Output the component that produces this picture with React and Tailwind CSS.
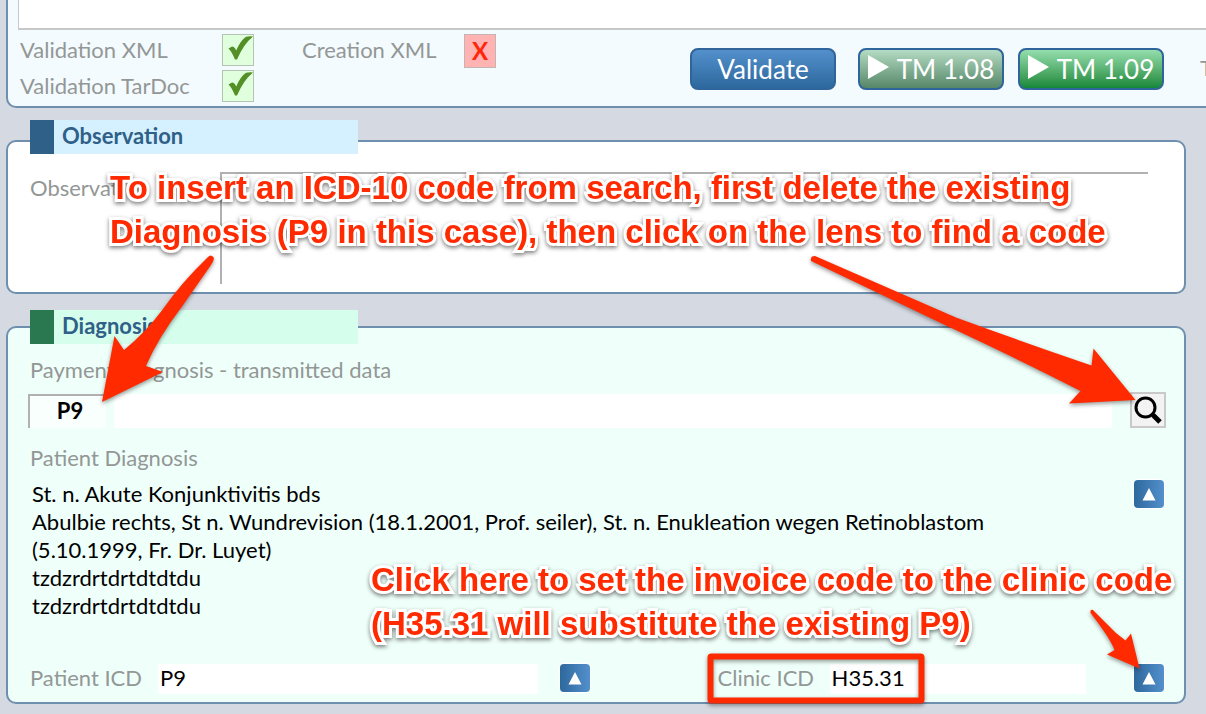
import { useId } from "react";

const label = "text-[22px] leading-7 text-[#939796] whitespace-nowrap";
const field = "bg-white text-[22px] text-black outline-none min-w-0";

function Tick() {
  return (
    <span className="flex h-8 w-8 items-center justify-center border border-[#b4c4b4] bg-[#dfffdd]" role="img" aria-label="Valid">
      <svg width="30" height="30" viewBox="0 0 30 30" fill="#538f26" aria-hidden="true">
        <path d="M5.500 13.500 L9 11.500 Q11.500 11.500 13.200 15.500 Q17.500 5.500 23 1.800 Q26.500 0.800 30 1.400 Q20.500 9 14 24.500 L12 24.500 Q9 17 5.500 13.500 Z" />
      </svg>
    </span>
  );
}

function SectionTitle({ children, bar, back, lift }) {
  return (
    <h2 className={`flex h-[34px] w-[328px] items-center ${lift} ${back}`}>
      <span className={`h-full w-6 ${bar}`} />
      <span className="pb-[2px] pl-2 text-[22px] font-bold leading-7 text-[#2f6088]">{children}</span>
    </h2>
  );
}

function UpButton({ name }) {
  return (
    <button type="button" aria-label={name} className="flex h-7 w-[30px] shrink-0 items-center justify-center rounded bg-linear-to-r from-[#2d689d] to-[#5390cc] ring-1 ring-white">
      <svg width="14" height="14" viewBox="0 0 14 14" fill="#fff" aria-hidden="true">
        <path d="M7 1 L13.500 13.500 H0.500 Z" />
      </svg>
    </button>
  );
}

function RunButton({ children, tone }) {
  return (
    <button type="button" className={`flex h-[42px] w-[146px] items-center justify-center gap-2 rounded-lg border-2 border-[#30659c] text-[26px] text-white ${tone}`}>
      {children}
    </button>
  );
}

function Play() {
  return (
    <svg width="21" height="24" viewBox="0 0 21 24" fill="#fff" className="mb-1" aria-hidden="true">
      <path d="M0 0 L21 12 L0 24 Z" />
    </svg>
  );
}

function Note({ place, children }) {
  return (
    <p className={`absolute whitespace-pre font-['Liberation_Sans',Arial,sans-serif] text-[33px] font-bold leading-[44px] text-[#ff2a00] [paint-order:stroke_fill] [-webkit-text-stroke:6px_#fff] drop-shadow-[0_2px_2px_rgba(0,0,0,0.5)] ${place}`}>
      {children}
    </p>
  );
}

const diagnosis = `St. n. Akute Konjunktivitis bds
Abulbie rechts, St n. Wundrevision (18.1.2001, Prof. seiler), St. n. Enukleation wegen Retinoblastom
(5.10.1999, Fr. Dr. Luyet)
tzdzrdrtdrtdtdtdu
tzdzrdrtdrtdtdtdu`;

export default function App() {
  const id = useId();
  return (
    <main className="relative min-h-screen overflow-hidden bg-[#d5d9e1] pb-[10px] pl-[6px] pr-5 font-[Lato,Carlito,sans-serif]">
      <section className="-mr-16 rounded-bl-[10px] border-b-2 border-l-2 border-[#6f8fae] bg-[#f3fbff] pb-1 pl-[10px]">
        <textarea aria-label="Messages" readOnly className="block h-[30px] w-full resize-none border-b-2 border-l border-[#c8c8c8] bg-white outline-none" />
        <div className="flex pt-1">
          <div className="grid w-[204px] shrink-0 grid-cols-1 gap-1 pl-[2px]">
            <span className={`${label} flex h-8 items-center`}>Validation XML</span>
            <span className={`${label} flex h-8 items-center`}>Validation TarDoc</span>
          </div>
          <div className="grid content-start gap-1">
            <Tick />
            <Tick />
          </div>
          <span className={`${label} flex h-8 w-[162px] items-center pl-12`}>Creation XML</span>
          <span className="ml-12 flex h-[34px] w-8 items-center justify-center border border-[#c4b4b4] bg-[#ffb3b3] text-[24px] font-bold text-[#ff260a]">X</span>
          <div className="ml-auto mr-[86px] flex pt-[14px]">
            <RunButton tone="bg-linear-to-b from-[#5390cc] to-[#2d689d]">Validate</RunButton>
            <div className="ml-[22px] flex gap-[14px]">
              <RunButton tone="bg-linear-to-b from-[#b4dcc4] to-[#568768]"><Play />TM 1.08</RunButton>
              <RunButton tone="bg-linear-to-b from-[#94deae] to-[#128838]"><Play />TM 1.09</RunButton>
            </div>
            <span className={`${label} -mr-9 ml-9 w-0 pt-[6px]`}>T</span>
          </div>
        </div>
      </section>

      <section className="mt-8 rounded-[10px] border-2 border-[#6f8fae] bg-white pb-2 pl-[22px] pr-9">
        <SectionTitle lift="-mt-[22px]" bar="bg-[#2f6088]" back="bg-[#d5f1ff]">Observation</SectionTitle>
        <div className="flex pt-[18px]">
          <label htmlFor={`${id}o`} className={`${label} flex w-[190px] shrink-0 gap-2 pt-[2px]`}>
            <span>Observation</span>
            <span>:</span>
          </label>
          <textarea id={`${id}o`} className={`${field} block h-28 flex-1 resize-none border-l-2 border-t-2 border-[#b1b1b1]`} />
        </div>
      </section>

      <section className="mt-8 rounded-[10px] border-2 border-[#6f8fae] bg-[#effffa] pb-2 pl-[22px] pr-5">
        <SectionTitle lift="-mt-[18px]" bar="bg-[#29784f]" back="bg-[#d5ffec]">Diagnosis</SectionTitle>
        <label htmlFor={`${id}p`} className={`${label} mt-3 block`}>Payment Diagnosis - transmitted data</label>
        <div className="-ml-[2px] mt-2 flex items-end">
          <input id={`${id}p`} defaultValue="P9" className="h-[34px] w-[78px] border-l-2 border-t-2 border-[#b1b1b1] bg-[#f8fffd] pb-1 pl-1 text-center text-[22px] font-bold outline-none" />
          <input aria-label="Diagnosis description" className={`${field} ml-2 h-[34px] flex-1`} />
          <button type="button" aria-label="Search code" className="-mr-[2px] ml-[18px] flex h-9 w-9 items-center justify-center border-2 border-[#c9c9c9] bg-[#f3f3f3]">
            <svg width="30" height="30" viewBox="0 0 30 30" fill="none" stroke="#000" aria-hidden="true">
              <circle cx="12.500" cy="12.500" r="9.500" strokeWidth="3" />
              <path d="M18.500 18.500 L21 21" strokeWidth="3" />
              <path d="M20 20 L27 27" strokeWidth="5" />
            </svg>
          </button>
        </div>
        <label htmlFor={`${id}d`} className={`${label} mt-4 block`}>Patient Diagnosis</label>
        <div className="mt-2 flex items-start justify-between">
          <textarea id={`${id}d`} rows={5} defaultValue={diagnosis} className="ml-[2px] block flex-1 resize-none overflow-hidden bg-transparent text-[22px] leading-7 text-black outline-none" />
          <UpButton name="Use patient diagnosis" />
        </div>
        <div className="mt-11 flex">
          <label htmlFor={`${id}i`} className={`${label} w-32 shrink-0`}>Patient ICD</label>
          <input id={`${id}i`} defaultValue="P9" className={`${field} h-[30px] flex-[380] pb-1 pl-[2px]`} />
          <div className="ml-[22px]"><UpButton name="Use patient ICD" /></div>
          <label htmlFor={`${id}c`} className={`${label} ml-32 w-28 shrink-0`}>Clinic ICD</label>
          <input id={`${id}c`} defaultValue="H35.31" className={`${field} h-[30px] flex-[256] pb-1 pl-[2px]`} />
          <div className="ml-12"><UpButton name="Use clinic ICD" /></div>
        </div>
      </section>

      <div className="pointer-events-none absolute inset-0">
        <svg width="1206" height="714" viewBox="0 0 1206 714" fill="#ff2a00" className="absolute left-0 top-0 drop-shadow-[0_2px_2px_rgba(0,0,0,0.4)]" aria-hidden="true">
          <path d="M102 402 L114.500 336 L124 350 Q146 332 163 309 Q182 282 207 258 Q211 253 214 258 Q214 261 211 265 L182 306.500 Q158 338 146 366 L163 372 Z" />
          <path d="M1135.500 400 L1093.500 348.500 L1091.500 365.500 Q1020 341 956 317.500 L815 256 Q810 256 811 261 L946 325.500 Q1020 360 1080.500 391 L1069 403.500 Z" />
          <path d="M1139.500 668.500 L1131 633.500 L1125.500 640.500 Q1116 634 1108 625 L1093 610 Q1090 609 1090.500 613 Q1110 638 1114.500 650 L1107 654.500 Z" />
          <rect x="710.500" y="656.500" width="211" height="44" rx="1" fill="none" stroke="#ff2a00" strokeWidth="6" />
        </svg>
        <Note place="left-[110px] top-[166px]">{"To insert an ICD-10 code from search, first delete the existing\nDiagnosis (P9 in this case), then click on the lens to find a code"}</Note>
        <Note place="left-[371px] top-[558px]">{"Click here to set the invoice code to the clinic code\n(H35.31 will substitute the existing P9)"}</Note>
      </div>
    </main>
  );
}
